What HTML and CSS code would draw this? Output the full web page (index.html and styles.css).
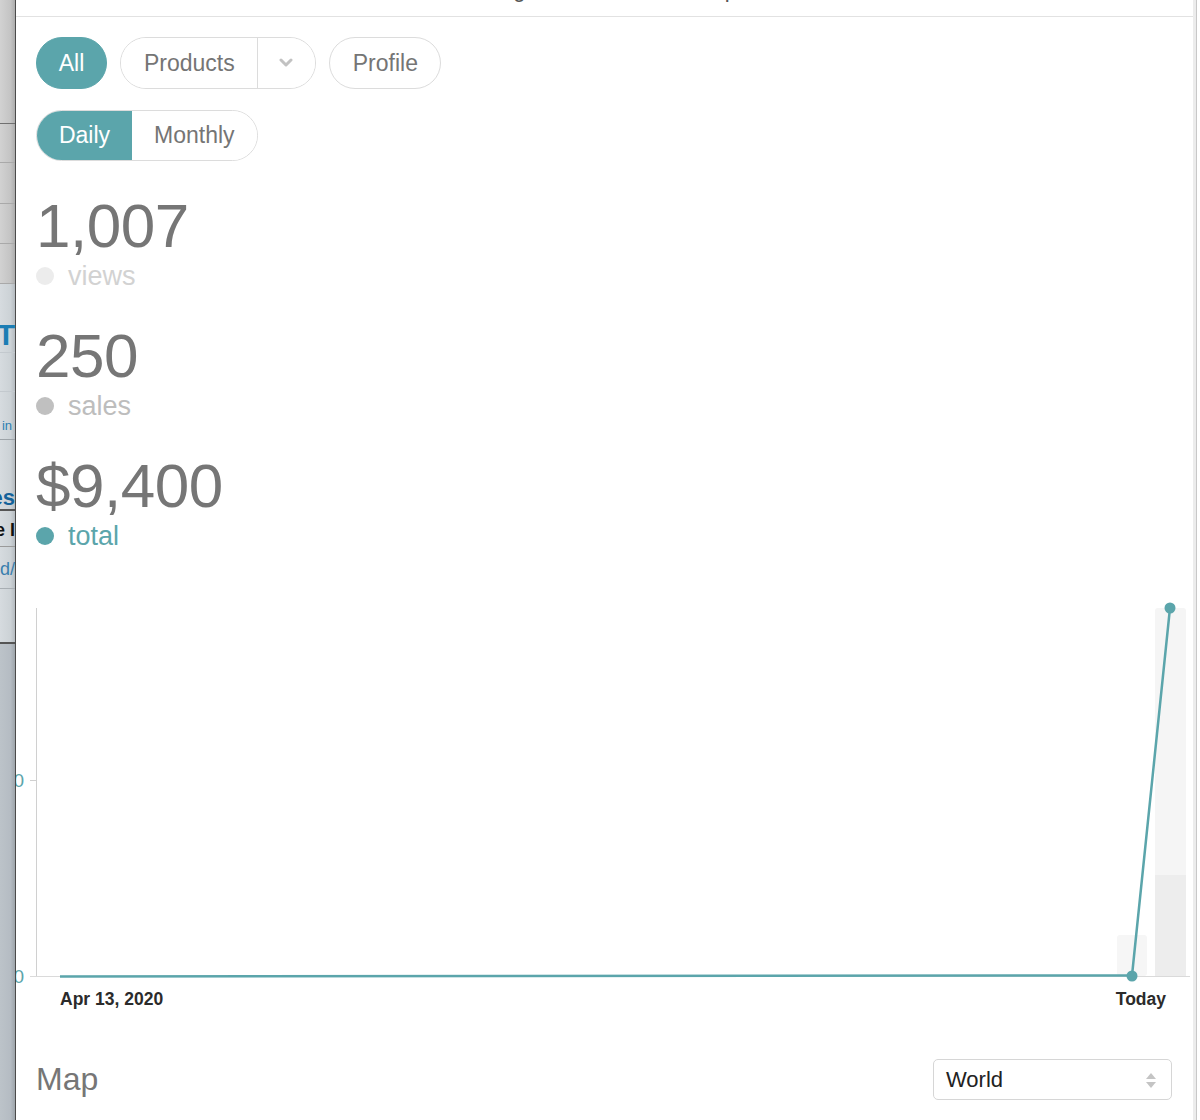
FILE: index.html
```html
<!DOCTYPE html>
<html lang="en">

<head>
    <meta charset="UTF-8">
    <meta name="viewport" content="width=device-width, initial-scale=1.0">
    <title>Analytics</title>
    <link rel="stylesheet" href="styles.css">
</head>

<body>
    <div class="desk">
        <!-- the page behind the sheet -->
        <aside class="behind">
            <div class="b-row r1"></div>
            <div class="b-row r2"></div>
            <div class="b-row r3"></div>
            <div class="b-row r4"></div>
            <div class="b-row r5"></div>
            <div class="b-row r6"><span class="b-t">Sell T</span></div>
            <div class="b-row r7"></div>
            <div class="b-row r8"><span class="b-in">Join in</span></div>
            <div class="b-row r9"><span class="b-es">Sales</span></div>
            <div class="b-row r10"><span class="b-ei">Mode I</span></div>
            <div class="b-row r11"><span class="b-d">/shared/</span></div>
            <div class="b-row r12"></div>
            <div class="b-row r13"></div>
        </aside>

        <main class="panel">
            <header class="sheet-head">
                <h2 class="sheet-title">Showing all sales for this shop</h2>
            </header>

            <div class="sheet-body">
                <div class="filters">
                    <button class="pill active">All</button>
                    <div class="pill-group">
                        <button class="pill-part">Products</button>
                        <button class="pill-part caret">
                            <svg width="14" height="10" viewBox="0 0 14 10">
                                <polyline points="2,2 7,7 12,2" fill="none" stroke="#c2c2c2" stroke-width="3" stroke-linecap="round" stroke-linejoin="round" />
                            </svg>
                        </button>
                    </div>
                    <button class="pill">Profile</button>
                </div>

                <div class="segment">
                    <button class="seg active">Daily</button>
                    <button class="seg">Monthly</button>
                </div>

                <div class="stat">
                    <div class="stat-num">1,007</div>
                    <div class="stat-label views"><span class="dot"></span>views</div>
                </div>
                <div class="stat">
                    <div class="stat-num">250</div>
                    <div class="stat-label sales"><span class="dot"></span>sales</div>
                </div>
                <div class="stat">
                    <div class="stat-num">$9,400</div>
                    <div class="stat-label total"><span class="dot"></span>total</div>
                </div>

                <svg class="chart" width="1177" height="440" viewBox="16 580 1177 440">
                    <rect x="1117" y="935" width="30" height="41" rx="3" fill="#f6f6f6" />
                    <rect x="1155" y="608" width="31" height="368" rx="3" fill="#f5f5f5" />
                    <rect x="1155" y="875" width="31" height="101" fill="#ededed" />

                    <line x1="36.5" y1="608" x2="36.5" y2="977" stroke="#d0d0d0" stroke-width="1" />
                    <line x1="30" y1="780.5" x2="36" y2="780.5" stroke="#d0d0d0" stroke-width="1" />
                    <line x1="30" y1="976.5" x2="1190" y2="976.5" stroke="#dadada" stroke-width="1" />
                    <text x="24" y="787" class="ytick">0</text>
                    <text x="24" y="983" class="ytick">0</text>

                    <polyline points="60,976.5 1132,975.5 1170,608" fill="none" stroke="#5ba5ab" stroke-width="2.5" stroke-linejoin="round" />
                    <circle cx="1132" cy="976" r="5.5" fill="#5ba5ab" />
                    <circle cx="1170" cy="608" r="5.5" fill="#5ba5ab" />

                    <text x="60" y="1005" class="xtick">Apr 13, 2020</text>
                    <text x="1166" y="1005" class="xtick" text-anchor="end">Today</text>
                </svg>

                <div class="map-row">
                    <h3 class="map-title">Map</h3>
                    <div class="select">
                        <span>World</span>
                        <svg width="12" height="20" viewBox="0 0 12 20">
                            <polygon points="6,3 11,9 1,9" fill="#c4c4c4" />
                            <polygon points="1,12 11,12 6,18" fill="#c4c4c4" />
                        </svg>
                    </div>
                </div>
            </div>
        </main>

        <div class="track"></div>
    </div>
</body>

</html>
```

FILE: styles.css
```css
body {
    margin: 0;
    background: #fff;
    font-family: "Liberation Sans", Arial, sans-serif;
}

.desk {
    display: flex;
    height: 1120px;
    overflow: hidden;
}

/* page behind */
.behind {
    width: 15px;
    flex: none;
    display: flex;
    flex-direction: column;
    overflow: hidden;
    border-right: 1px solid #4b4b4b;
    background: linear-gradient(to right, #d2d2d2, #c4c4c4 70%, #adadad);
}

.b-row {
    display: flex;
    justify-content: flex-end;
    align-items: center;
    white-space: nowrap;
    overflow: hidden;
    flex: none;
}

.r1 { height: 123px; border-bottom: 1px solid #707070; }
.r2 { height: 38px; border-bottom: 1px solid #a9a9a9; }
.r3 { height: 40px; border-bottom: 1px solid #a9a9a9; }
.r4 { height: 39px; border-bottom: 1px solid #a9a9a9; }
.r5 { height: 39px; border-bottom: 1px solid #a9a9a9; }

.r6,
.r7,
.r8,
.r9,
.r10,
.r11,
.r12 {
    background: linear-gradient(to right, #d6dbdf, #ccd2d6 70%, #b5bbc0);
}

.r6 { height: 68px; border-bottom: 1px solid #c3c9ce; align-items: flex-end; }
.r7 { height: 38px; border-bottom: 1px solid #c3c9ce; }
.r8 { height: 47px; border-bottom: 1px solid #9da3a8; align-items: flex-end; padding-right: 3px; }
.r9 { height: 69px; border-bottom: 2px solid #555; align-items: flex-end; }
.r10 { height: 35px; border-bottom: 1px solid #9a9a9a; }
.r11 { height: 41px; border-bottom: 1px solid #a8aeb3; }
.r12 { height: 53px; border-bottom: 2px solid #555; }
.r13 {
    flex: 1;
    background: linear-gradient(to right, #bcc3c9, #b5bcc3 70%, #9ea5ab);
}

.b-t {
    color: #1b7db4;
    font-weight: bold;
    font-size: 30px;
    line-height: 30px;
    margin-bottom: 2px;
}

.b-in {
    color: #2c7fb2;
    font-size: 13px;
    margin-bottom: 6px;
}

.b-es {
    color: #14629a;
    font-weight: bold;
    font-size: 22px;
    line-height: 22px;
    margin-bottom: 0;
}

.b-ei {
    color: #111;
    font-weight: bold;
    font-size: 18px;
    margin-top: 4px;
}

.b-d {
    color: #3a7fae;
    font-size: 18px;
    margin-top: 4px;
}

/* sheet */
.panel {
    width: 1177px;
    flex: none;
    overflow: hidden;
    background: #fff;
}

.track {
    width: 3px;
    flex: none;
    background: #ececec;
    border-right: 1px solid #c8c8c8;
}

.sheet-head {
    height: 16px;
    border-bottom: 1px solid #e2e2e2;
    overflow: hidden;
}

.sheet-title {
    margin: -21px 0 0;
    padding-left: 425px;
    font-size: 22px;
    line-height: 22px;
    font-weight: normal;
    color: #555;
    white-space: nowrap;
}

.sheet-body {
    padding: 20px 21px 0 20px;
}

.filters {
    display: flex;
    gap: 13px;
}

button {
    font-family: inherit;
    cursor: pointer;
}

.pill {
    height: 52px;
    padding: 0 22px 0 23px;
    border: 1px solid #dcdcdc;
    border-radius: 26px;
    background: #fff;
    color: #757575;
    font-size: 23px;
}

.pill.active,
.seg.active {
    background: #5ba5ab;
    border-color: #5ba5ab;
    color: #fff;
}

.pill.active {
    width: 71px;
    padding: 0;
}

.pill-group {
    display: flex;
    height: 52px;
    border: 1px solid #dcdcdc;
    border-radius: 26px;
    box-sizing: border-box;
    overflow: hidden;
}

.pill-part {
    border: 0;
    background: #fff;
    color: #757575;
    font-size: 23px;
    padding: 0 22px 0 23px;
}

.pill-part.caret {
    width: 58px;
    padding: 0;
    border-left: 1px solid #dcdcdc;
    display: flex;
    align-items: center;
    justify-content: center;
}

.segment {
    display: inline-flex;
    margin-top: 21px;
    height: 51px;
    border: 1px solid #dcdcdc;
    border-radius: 26px;
    overflow: hidden;
    box-sizing: border-box;
}

.seg {
    border: 0;
    background: #fff;
    color: #757575;
    font-size: 23px;
    padding: 0 22px;
}

.seg.active {
    width: 95px;
    padding: 0;
}

.stat {
    margin-top: 34px;
}

.stat-num {
    font-size: 62px;
    line-height: 61px;
    color: #767676;
    letter-spacing: -0.5px;
}

.stat-label {
    display: flex;
    align-items: center;
    gap: 14px;
    height: 30px;
    margin-top: 5px;
    font-size: 27px;
}

.dot {
    width: 18px;
    height: 18px;
    border-radius: 50%;
}

.views { color: #d2d2d2; }
.views .dot { background: #ececec; }
.sales { color: #bdbdbd; }
.sales .dot { background: #c0c0c0; }
.total { color: #5ba5ab; }
.total .dot { background: #5ba5ab; }

.chart {
    display: block;
    margin: 29px -21px 0 -20px;
}

.ytick {
    font-size: 19px;
    fill: #5ba5ab;
    text-anchor: end;
}

.xtick {
    font-size: 17.5px;
    font-weight: bold;
    fill: #2b2b2b;
}

.map-row {
    display: flex;
    justify-content: space-between;
    align-items: center;
    margin-top: 39px;
}

.map-title {
    margin: 0;
    font-size: 32px;
    font-weight: normal;
    color: #767676;
}

.select {
    width: 239px;
    height: 41px;
    box-sizing: border-box;
    border: 1px solid #d6d6d6;
    border-radius: 5px;
    display: flex;
    align-items: center;
    justify-content: space-between;
    padding: 0 14px 0 12px;
    font-size: 22px;
    color: #222;
}
```
